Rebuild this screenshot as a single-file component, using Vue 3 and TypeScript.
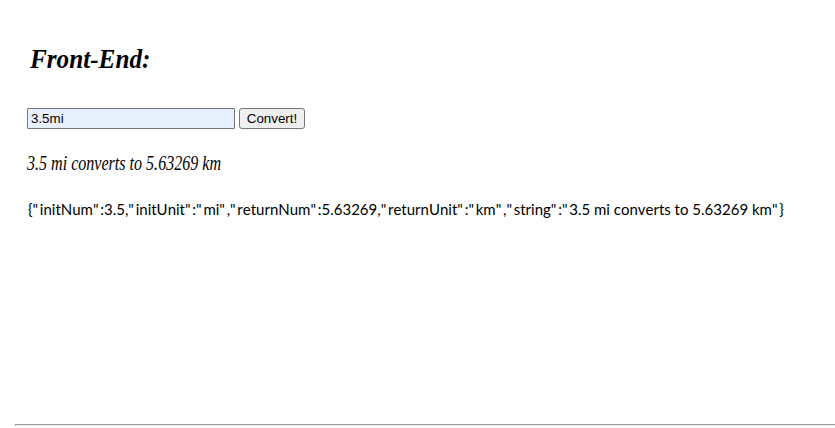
<script setup lang="ts">
import { computed, ref } from 'vue'

interface Conversion {
  initNum: number
  initUnit: string
  returnNum: number
  returnUnit: string
  string: string
}

const input = ref('3.5mi')
const result = ref<Conversion>({
  initNum: 3.5,
  initUnit: 'mi',
  returnNum: 5.63269,
  returnUnit: 'km',
  string: '3.5 mi converts to 5.63269 km',
})
// Quotes are separate tokens so they can be spaced more widely than the text.
const tokens = computed(() => JSON.stringify(result.value).split(/(")/).filter(Boolean))

function convert(): void {
  const match = /^([\d.]+)\s*(mi|km)$/i.exec(input.value.trim())
  if (!match) return
  const initNum = Number(match[1])
  const initUnit = match[2].toLowerCase()
  const toKm = initUnit === 'mi'
  const returnNum = Number((toKm ? initNum * 1.60934 : initNum / 1.60934).toFixed(5))
  const returnUnit = toKm ? 'km' : 'mi'
  result.value = {
    initNum,
    initUnit,
    returnNum,
    returnUnit,
    string: `${initNum} ${initUnit} converts to ${returnNum} ${returnUnit}`,
  }
}
</script>

<template>
  <main class="page">
    <section class="front-end">
      <h2 class="heading"><span class="heading-text">Front-End:</span></h2>
      <form class="form" @submit.prevent="convert">
        <input v-model="input" class="field" type="text" />
        <button class="submit" type="submit">Convert!</button>
      </form>
      <p class="result"><span class="result-text">{{ result.string }}</span></p>
      <code class="json"><span v-for="(token, i) in tokens" :key="i" :class="{ quote: token === '&quot;' }">{{ token }}</span></code>
    </section>
    <hr class="rule" />
  </main>
</template>

<style>
body {
  margin: 0;
  background: #fff;
  overflow: hidden;
}
</style>

<style scoped>
.page {
  box-sizing: border-box;
  height: 428px;
  padding-left: 15px;
  color: #000;
  display: flex;
  flex-direction: column;
}
.front-end {
  box-sizing: border-box;
  height: 424px;
  padding: 40px 12px 0;
}
.heading {
  margin: 0;
  height: 40px;
  padding-left: 3px;
  font: italic 700 28px/38px "Liberation Serif", serif;
  white-space: nowrap;
}
.heading-text {
  display: inline-block;
  transform: scaleX(0.9);
  transform-origin: 0 50%;
}
.form {
  display: flex;
  gap: 4px;
  margin-top: 28px;
}
.field {
  box-sizing: border-box;
  width: 208px;
  height: 21px;
  padding: 1px 3px;
  border: 1px solid #767676;
  border-radius: 1px;
  background: #e8f0fe;
  color: #000;
  font: 13.333px "Liberation Sans", sans-serif;
  outline: none;
}
.submit {
  box-sizing: border-box;
  width: 66px;
  height: 21px;
  padding: 0;
  border: 1px solid #767676;
  border-radius: 3px;
  background: #efefef;
  color: #000;
  font: 13.333px "Liberation Sans", sans-serif;
}
.result {
  margin: 22px 0 0;
  height: 24px;
  font: italic 20px/25px "Liberation Serif", serif;
  white-space: nowrap;
}
.result-text {
  display: inline-block;
  transform: scaleX(0.803);
  transform-origin: 0 50%;
}
.json {
  display: block;
  margin-top: 25px;
  height: 20px;
  padding-left: 1px;
  font: 15px/18px Lato, sans-serif;
  font-kerning: none;
  white-space: pre;
}
.quote {
  letter-spacing: 1.75px;
}
.rule {
  box-sizing: border-box;
  flex: none;
  width: 100%;
  height: 2px;
  margin: 0;
  border: solid;
  border-width: 1px 0 1px 1px;
  border-color: #9a9a9a #eee #eee #9a9a9a;
}
</style>
